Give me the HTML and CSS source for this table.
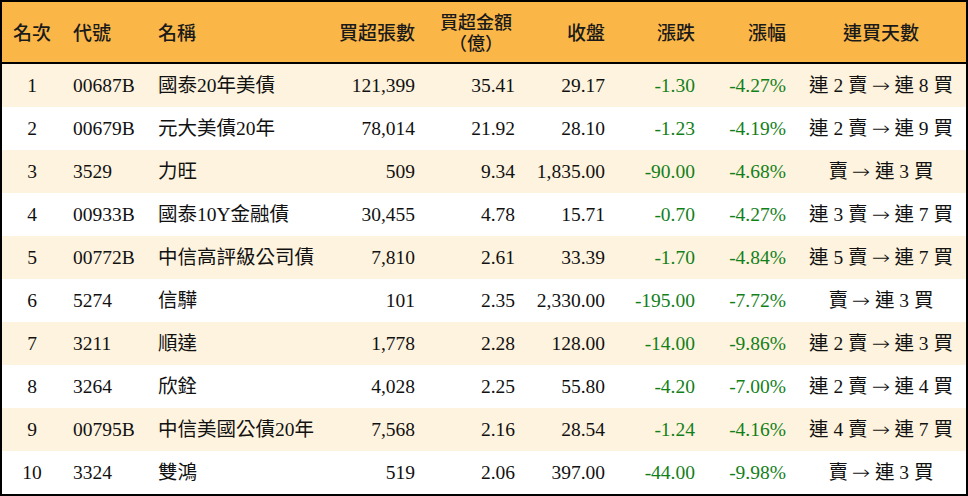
FILE: index.html
```html
<!DOCTYPE html>
<html lang="zh-Hant">
<head>
<meta charset="utf-8">
<link rel="stylesheet" href="styles.css">
<title>買超排行</title>
</head>
<body>
<div class="board">
  <div class="row head">
    <div class="c c1">名次</div>
    <div class="c c2">代號</div>
    <div class="c c3">名稱</div>
    <div class="c num">買超張數</div>
    <div class="c two">買超金額<br>（億）</div>
    <div class="c num">收盤</div>
    <div class="c num">漲跌</div>
    <div class="c num">漲幅</div>
    <div class="c c9">連買天數</div>
  </div>

  <div class="row odd">
    <div class="c c1">1</div><div class="c c2">00687B</div><div class="c c3">國泰20年美債</div>
    <div class="c num">121,399</div><div class="c num">35.41</div><div class="c num">29.17</div>
    <div class="c num g">-1.30</div><div class="c num g">-4.27%</div><div class="c c9">連 2 賣<span class="arr">→</span>連 8 買</div>
  </div>
  <div class="row">
    <div class="c c1">2</div><div class="c c2">00679B</div><div class="c c3">元大美債20年</div>
    <div class="c num">78,014</div><div class="c num">21.92</div><div class="c num">28.10</div>
    <div class="c num g">-1.23</div><div class="c num g">-4.19%</div><div class="c c9">連 2 賣<span class="arr">→</span>連 9 買</div>
  </div>
  <div class="row odd">
    <div class="c c1">3</div><div class="c c2">3529</div><div class="c c3">力旺</div>
    <div class="c num">509</div><div class="c num">9.34</div><div class="c num">1,835.00</div>
    <div class="c num g">-90.00</div><div class="c num g">-4.68%</div><div class="c c9">賣<span class="arr">→</span>連 3 買</div>
  </div>
  <div class="row">
    <div class="c c1">4</div><div class="c c2">00933B</div><div class="c c3">國泰10Y金融債</div>
    <div class="c num">30,455</div><div class="c num">4.78</div><div class="c num">15.71</div>
    <div class="c num g">-0.70</div><div class="c num g">-4.27%</div><div class="c c9">連 3 賣<span class="arr">→</span>連 7 買</div>
  </div>
  <div class="row odd">
    <div class="c c1">5</div><div class="c c2">00772B</div><div class="c c3">中信高評級公司債</div>
    <div class="c num">7,810</div><div class="c num">2.61</div><div class="c num">33.39</div>
    <div class="c num g">-1.70</div><div class="c num g">-4.84%</div><div class="c c9">連 5 賣<span class="arr">→</span>連 7 買</div>
  </div>
  <div class="row">
    <div class="c c1">6</div><div class="c c2">5274</div><div class="c c3">信驊</div>
    <div class="c num">101</div><div class="c num">2.35</div><div class="c num">2,330.00</div>
    <div class="c num g">-195.00</div><div class="c num g">-7.72%</div><div class="c c9">賣<span class="arr">→</span>連 3 買</div>
  </div>
  <div class="row odd">
    <div class="c c1">7</div><div class="c c2">3211</div><div class="c c3">順達</div>
    <div class="c num">1,778</div><div class="c num">2.28</div><div class="c num">128.00</div>
    <div class="c num g">-14.00</div><div class="c num g">-9.86%</div><div class="c c9">連 2 賣<span class="arr">→</span>連 3 買</div>
  </div>
  <div class="row">
    <div class="c c1">8</div><div class="c c2">3264</div><div class="c c3">欣銓</div>
    <div class="c num">4,028</div><div class="c num">2.25</div><div class="c num">55.80</div>
    <div class="c num g">-4.20</div><div class="c num g">-7.00%</div><div class="c c9">連 2 賣<span class="arr">→</span>連 4 買</div>
  </div>
  <div class="row odd">
    <div class="c c1">9</div><div class="c c2">00795B</div><div class="c c3">中信美國公債20年</div>
    <div class="c num">7,568</div><div class="c num">2.16</div><div class="c num">28.54</div>
    <div class="c num g">-1.24</div><div class="c num g">-4.16%</div><div class="c c9">連 4 賣<span class="arr">→</span>連 7 買</div>
  </div>
  <div class="row">
    <div class="c c1">10</div><div class="c c2">3324</div><div class="c c3">雙鴻</div>
    <div class="c num">519</div><div class="c num">2.06</div><div class="c num">397.00</div>
    <div class="c num g">-44.00</div><div class="c num g">-9.98%</div><div class="c c9">賣<span class="arr">→</span>連 3 買</div>
  </div>
</div>
</body>
</html>
```

FILE: styles.css
```css
html, body {
  margin: 0;
  padding: 0;
  background: #000;
}

.board {
  width: 968px;
  height: 496px;
  box-sizing: border-box;
  border: 2px solid #000;
  background: #fff;
  font-family: "Liberation Serif", "Noto Sans CJK TC", serif;
  font-size: 19.5px;
  color: #111;
  overflow: hidden;
}

.row {
  display: grid;
  grid-template-columns: 60px 86px 182px 95px 100px 90px 90px 91px 170px;
  height: 43px;
  align-items: center;
  background: #fff;
}

.row.odd {
  background: #fef3de;
}

.row.head {
  height: 60px;
  background: #fab748;
  border-bottom: 2px solid #000;
  font-family: "Noto Sans CJK TC", sans-serif;
  font-weight: 500;
  font-size: 19px;
  color: #1a1a1a;
}

.c {
  white-space: nowrap;
  line-height: 1.2;
}

.c1 { text-align: center; }
.c2 { padding-left: 11px; }
.c3 { padding-left: 10px; }
.num { text-align: right; padding-right: 10px; }
.c9 { text-align: center; }

.two {
  text-align: center;
  padding-left: 12px;
  padding-right: 10px;
  font-size: 18px;
  line-height: 21px;
}

.arr {
  font-family: "DejaVu Sans", sans-serif;
  font-weight: 300;
  font-size: 19px;
  display: inline-block;
  margin: 0 6px 0 5px;
  transform: scaleX(1.15);
}

.g { color: #12801a; }
```
